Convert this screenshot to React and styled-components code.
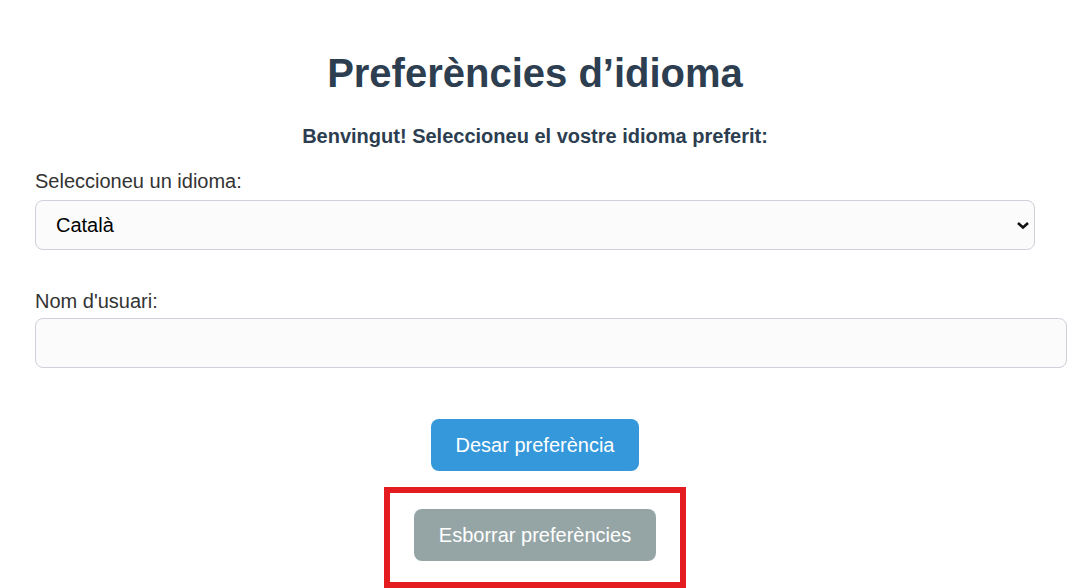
import React, { useState } from 'react';
import styled, { createGlobalStyle } from 'styled-components';

const GlobalStyle = createGlobalStyle`
  body {
    margin: 0;
    background: #ffffff;
    font-family: "Liberation Sans", Arial, sans-serif;
  }
`;

const Container = styled.div`
  display: flex;
  flex-direction: column;
  width: 1000px;
  margin-left: 35px;
  padding-top: 50px;
`;

const Title = styled.h1`
  margin: 0;
  color: #2c3e50;
  text-align: center;
  font-size: 40px;
  line-height: 46px;
  font-weight: bold;
`;

const Subtitle = styled.p`
  margin: 29px 0 0;
  color: #2c3e50;
  text-align: center;
  font-size: 20px;
  line-height: 23px;
  font-weight: bold;
`;

const Field = styled.div`
  display: flex;
  flex-direction: column;
  gap: ${(p) => p.gap}px;
  margin-top: ${(p) => p.top}px;
`;

const Label = styled.label`
  color: #333333;
  font-size: 20px;
  line-height: 23px;
`;

const SelectWrap = styled.div`
  position: relative;
  width: 1000px;
`;

const Select = styled.select`
  appearance: none;
  width: 100%;
  height: 50px;
  box-sizing: border-box;
  padding: 0 40px 0 20px;
  border: 1px solid #cfd0d8;
  border-radius: 8px;
  background: #fbfbfb;
  color: #000000;
  font-family: inherit;
  font-size: 20px;
  outline: none;
`;

const Chevron = styled.svg`
  position: absolute;
  right: 5px;
  top: 21px;
  pointer-events: none;
`;

const TextInput = styled.input`
  width: 1000px;
  height: 48px;
  padding: 0 15px;
  border: 1px solid #cfd0d8;
  border-radius: 8px;
  background: #fbfbfb;
  font-family: inherit;
  font-size: 20px;
  outline: none;
`;

const Actions = styled.div`
  display: flex;
  flex-direction: column;
  align-items: center;
  gap: 16px;
  margin-top: 51px;
`;

const Button = styled.button`
  padding: 15px 25px;
  border: none;
  border-radius: 8px;
  background: ${(p) => p.bg};
  color: #ffffff;
  font-family: inherit;
  font-size: 20px;
  line-height: 22px;
  cursor: pointer;
`;

const Highlight = styled.div`
  display: flex;
  justify-content: center;
  width: 290px;
  padding: 16px 0 21px;
  border: 6px solid #e41b1f;
`;

function App() {
  const [lang, setLang] = useState('ca');
  const [name, setName] = useState('');

  return (
    <>
      <GlobalStyle />
      <Container>
        <Title>Preferències d’idioma</Title>
        <Subtitle>Benvingut! Seleccioneu el vostre idioma preferit:</Subtitle>

        <Field top={22} gap={7}>
          <Label htmlFor="lang">Seleccioneu un idioma:</Label>
          <SelectWrap>
            <Select id="lang" value={lang} onChange={(e) => setLang(e.target.value)}>
              <option value="ca">Català</option>
              <option value="es">Español</option>
              <option value="en">English</option>
            </Select>
            <Chevron width="14" height="9" viewBox="0 0 14 9">
              <path d="M2 2l5 4.5L12 2" fill="none" stroke="#111" strokeWidth="2.6" />
            </Chevron>
          </SelectWrap>
        </Field>

        <Field top={40} gap={5}>
          <Label htmlFor="user">Nom d'usuari:</Label>
          <TextInput id="user" value={name} onChange={(e) => setName(e.target.value)} />
        </Field>

        <Actions>
          <Button bg="#3498db">Desar preferència</Button>
          <Highlight>
            <Button bg="#95a5a6">Esborrar preferències</Button>
          </Highlight>
        </Actions>
      </Container>
    </>
  );
}

export default App;
